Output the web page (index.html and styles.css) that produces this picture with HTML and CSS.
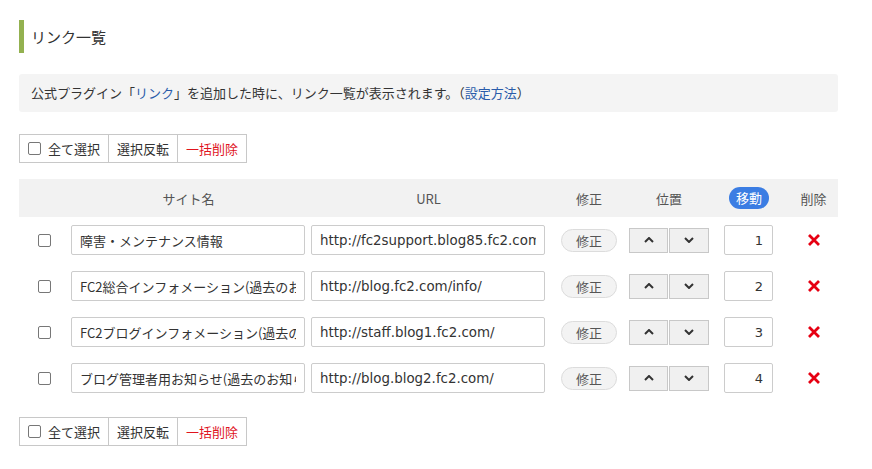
FILE: index.html
```html
<!DOCTYPE html>
<html lang="ja">
<head>
<meta charset="utf-8">
<title>リンク一覧</title>
<link rel="stylesheet" href="styles.css">
</head>
<body>
<div class="page">
  <h2 class="title">リンク一覧</h2>
  <p class="info">公式プラグイン「<a href="#">リンク</a>」を追加した時に、リンク一覧が表示されます。（<a href="#">設定方法</a>）</p>

  <div class="btn-group">
    <label class="bg-btn"><input type="checkbox" class="chk"> 全て選択</label>
    <span class="bg-btn">選択反転</span>
    <span class="bg-btn danger">一括削除</span>
  </div>

  <div class="grid">
    <div class="row head">
      <div class="cell"></div>
      <div class="cell">サイト名</div>
      <div class="cell">URL</div>
      <div class="cell">修正</div>
      <div class="cell">位置</div>
      <div class="cell"><span class="pill">移動</span></div>
      <div class="cell">削除</div>
    </div>

    <div class="row">
      <div class="cell"><input type="checkbox" class="chk"></div>
      <div class="cell name"><input class="txt" type="text" value="障害・メンテナンス情報"></div>
      <div class="cell url"><input class="txt" type="text" value="http://fc2support.blog85.fc2.com/"></div>
      <div class="cell"><span class="edit">修正</span></div>
      <div class="cell"><span class="arrows"><span class="arr"><svg viewBox="0 0 10 6" width="10" height="6"><path d="M1 5 L5 1 L9 5" /></svg></span><span class="arr"><svg viewBox="0 0 10 6" width="10" height="6"><path d="M1 1 L5 5 L9 1" /></svg></span></span></div>
      <div class="cell"><input class="num" type="text" value="1"></div>
      <div class="cell"><svg class="del" viewBox="0 0 14 14" width="14" height="14"><path d="M2 2 L12 12 M12 2 L2 12" /></svg></div>
    </div>

    <div class="row">
      <div class="cell"><input type="checkbox" class="chk"></div>
      <div class="cell name"><input class="txt" type="text" value="FC2総合インフォメーション(過去のお知らせ)"></div>
      <div class="cell url"><input class="txt" type="text" value="http://blog.fc2.com/info/"></div>
      <div class="cell"><span class="edit">修正</span></div>
      <div class="cell"><span class="arrows"><span class="arr"><svg viewBox="0 0 10 6" width="10" height="6"><path d="M1 5 L5 1 L9 5" /></svg></span><span class="arr"><svg viewBox="0 0 10 6" width="10" height="6"><path d="M1 1 L5 5 L9 1" /></svg></span></span></div>
      <div class="cell"><input class="num" type="text" value="2"></div>
      <div class="cell"><svg class="del" viewBox="0 0 14 14" width="14" height="14"><path d="M2 2 L12 12 M12 2 L2 12" /></svg></div>
    </div>

    <div class="row">
      <div class="cell"><input type="checkbox" class="chk"></div>
      <div class="cell name"><input class="txt" type="text" value="FC2ブログインフォメーション(過去のお知らせ)"></div>
      <div class="cell url"><input class="txt" type="text" value="http://staff.blog1.fc2.com/"></div>
      <div class="cell"><span class="edit">修正</span></div>
      <div class="cell"><span class="arrows"><span class="arr"><svg viewBox="0 0 10 6" width="10" height="6"><path d="M1 5 L5 1 L9 5" /></svg></span><span class="arr"><svg viewBox="0 0 10 6" width="10" height="6"><path d="M1 1 L5 5 L9 1" /></svg></span></span></div>
      <div class="cell"><input class="num" type="text" value="3"></div>
      <div class="cell"><svg class="del" viewBox="0 0 14 14" width="14" height="14"><path d="M2 2 L12 12 M12 2 L2 12" /></svg></div>
    </div>

    <div class="row">
      <div class="cell"><input type="checkbox" class="chk"></div>
      <div class="cell name"><input class="txt" type="text" value="ブログ管理者用お知らせ(過去のお知らせ)"></div>
      <div class="cell url"><input class="txt" type="text" value="http://blog.blog2.fc2.com/"></div>
      <div class="cell"><span class="edit">修正</span></div>
      <div class="cell"><span class="arrows"><span class="arr"><svg viewBox="0 0 10 6" width="10" height="6"><path d="M1 5 L5 1 L9 5" /></svg></span><span class="arr"><svg viewBox="0 0 10 6" width="10" height="6"><path d="M1 1 L5 5 L9 1" /></svg></span></span></div>
      <div class="cell"><input class="num" type="text" value="4"></div>
      <div class="cell"><svg class="del" viewBox="0 0 14 14" width="14" height="14"><path d="M2 2 L12 12 M12 2 L2 12" /></svg></div>
    </div>
  </div>

  <div class="btn-group">
    <label class="bg-btn"><input type="checkbox" class="chk"> 全て選択</label>
    <span class="bg-btn">選択反転</span>
    <span class="bg-btn danger">一括削除</span>
  </div>
</div>
</body>
</html>
```

FILE: styles.css
```css
html, body {
  margin: 0;
  padding: 0;
  background: #fff;
}
body {
  font-family: "Noto Sans CJK JP", "Noto Sans", sans-serif;
  font-size: 13px;
  color: #333;
}
.page {
  width: 819px;
  margin-left: 19px;
  padding-top: 20px;
}
.title {
  margin: 0;
  height: 33px;
  border-left: 5px solid #93b150;
  padding-left: 7px;
  font-size: 15px;
  font-weight: normal;
  line-height: 33px;
  color: #333;
}
.info {
  margin: 21px 0 0;
  height: 38px;
  line-height: 38px;
  padding: 0 12px;
  background: #f4f4f4;
  border-radius: 3px;
}
.info a {
  color: #2a5caa;
  text-decoration: none;
}
.btn-group {
  display: inline-flex;
  margin-top: 22px;
  border: 1px solid #c8c8c8;
  height: 29px;
  box-sizing: border-box;
}
.grid + .btn-group {
  margin-top: 16px;
}
.bg-btn {
  display: flex;
  align-items: center;
  gap: 7px;
  padding: 0 8px;
  border-left: 1px solid #c8c8c8;
  color: #333;
}
.bg-btn:first-child {
  border-left: none;
}
.bg-btn.danger {
  color: #e0141e;
}
.chk {
  appearance: none;
  -webkit-appearance: none;
  margin: 0;
  width: 13px;
  height: 13px;
  border: 1px solid #777;
  border-radius: 2px;
  background: #fff;
  box-sizing: border-box;
}
.grid {
  margin-top: 16px;
  display: flex;
  flex-direction: column;
}
.row {
  display: grid;
  grid-template-columns: 50px 239px 241px 80px 80px 80px 49px;
  height: 46px;
  align-items: center;
}
.row.head {
  height: 38px;
  background: #f2f2f2;
  color: #555;
}
.cell {
  display: flex;
  justify-content: center;
  align-items: center;
}
.cell.name {
  justify-content: flex-start;
  padding-left: 2px;
}
.cell.url {
  justify-content: flex-start;
  padding-left: 3px;
}
.txt {
  width: 234px;
  height: 30px;
  box-sizing: border-box;
  border: 1px solid #ccc;
  border-radius: 2px;
  padding: 0 8px;
  font-family: "Noto Sans CJK JP", "Noto Sans", sans-serif;
  font-size: 13px;
  color: #333;
  outline: none;
}
.cell.url .txt {
  font-family: "DejaVu Sans", "Noto Sans CJK JP", sans-serif;
  font-size: 13.4px;
}
.num {
  width: 49px;
  height: 30px;
  box-sizing: border-box;
  border: 1px solid #ccc;
  border-radius: 2px;
  padding: 0 9px 0 0;
  text-align: right;
  font-family: "DejaVu Sans", "Noto Sans CJK JP", sans-serif;
  font-size: 13px;
  color: #333;
  outline: none;
  margin-left: -1px;
}
.pill {
  display: inline-block;
  width: 40px;
  height: 22px;
  line-height: 22px;
  text-align: center;
  border-radius: 11px;
  background: #3b7de3;
  color: #fff;
}
.edit {
  display: inline-block;
  width: 56px;
  height: 23px;
  line-height: 21px;
  box-sizing: border-box;
  text-align: center;
  border: 1px solid #dcdcdc;
  border-radius: 12px;
  background: #f3f3f3;
  color: #555;
}
.arrows {
  display: flex;
}
.arr {
  display: flex;
  align-items: center;
  justify-content: center;
  width: 40px;
  height: 25px;
  box-sizing: border-box;
  border: 1px solid #c8c8c8;
  background: #f0f0f0;
}
.arr:first-child {
  width: 39px;
  margin-right: 1px;
}
.arr svg path {
  fill: none;
  stroke: #333;
  stroke-width: 2;
  stroke-linecap: butt;
  stroke-linejoin: miter;
}
.del path {
  stroke: #e60012;
  stroke-width: 2.8;
  fill: none;
}
```
